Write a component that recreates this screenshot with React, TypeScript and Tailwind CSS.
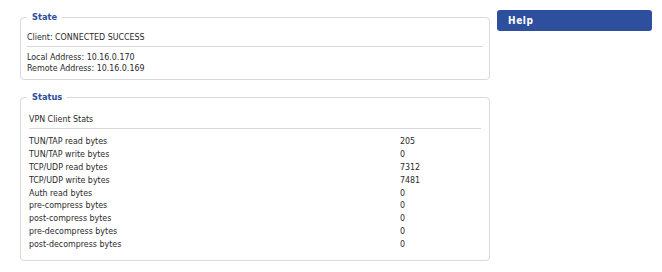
import React from "react";

const rows: [string, string][] = [
  ["TUN/TAP read bytes", "205"],
  ["TUN/TAP write bytes", "0"],
  ["TCP/UDP read bytes", "7312"],
  ["TCP/UDP write bytes", "7481"],
  ["Auth read bytes", "0"],
  ["pre-compress bytes", "0"],
  ["post-compress bytes", "0"],
  ["pre-decompress bytes", "0"],
  ["post-decompress bytes", "0"],
];

export default function App() {
  return (
    <div className="w-[662px] h-[272px] bg-white flex gap-[7px] pl-[20px] pt-[11px] text-[#2a2a2a] text-[8.8px] leading-[11px] font-['DejaVu_Sans_Condensed','DejaVu_Sans',sans-serif]">
      <div className="w-[470px] flex flex-col gap-[11px]">
        <fieldset className="border border-[#d9d9d9] rounded-[4px] px-[6px] pb-[5px] pt-0">
          <legend className="px-[5px] text-[#2e4e9b] font-bold text-[9.2px] leading-[12px]">State</legend>
          <div className="pt-[9px] pb-[3px] border-b border-[#d9d9d9]">Client: CONNECTED SUCCESS</div>
          <div className="pt-[5px]">
            <div>Local Address: 10.16.0.170</div>
            <div>Remote Address: 10.16.0.169</div>
          </div>
        </fieldset>
        <fieldset className="border border-[#d9d9d9] rounded-[4px] px-[8px] pb-[9px] pt-0">
          <legend className="px-[5px] -ml-[2px] text-[#2e4e9b] font-bold text-[9.2px] leading-[12px]">Status</legend>
          <div className="pt-[11px] pb-[3px] border-b border-[#d9d9d9]">VPN Client Stats</div>
          <div className="pt-[6px] flex flex-col">
            {rows.map(([k, v]) => (
              <div key={k} className="flex h-[12.9px] items-center">
                <div className="w-[371px]">{k}</div>
                <div>{v}</div>
              </div>
            ))}
          </div>
        </fieldset>
      </div>
      <div className="w-[155px] -mt-[1px]">
        <div className="h-[21px] rounded-[3px] bg-[#2d4f9e] text-white font-bold text-[10px] flex items-center pl-[11px] tracking-[0.6px]">
          Help
        </div>
      </div>
    </div>
  );
}
